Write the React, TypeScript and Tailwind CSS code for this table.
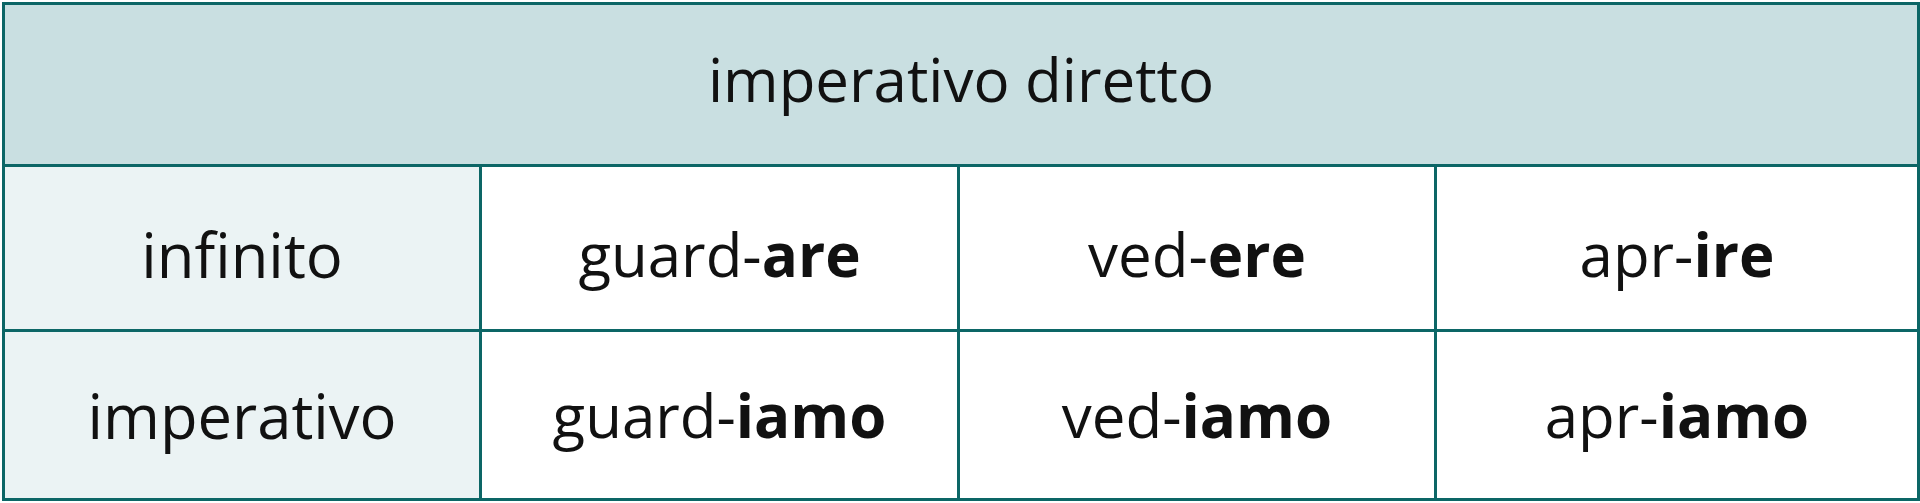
const rows = [
  { label: "infinito", cells: [["guard-", "are"], ["ved-", "ere"], ["apr-", "ire"]] },
  { label: "imperativo", cells: [["guard-", "iamo"], ["ved-", "iamo"], ["apr-", "iamo"]] },
];

export default function App() {
  return (
    <div className="bg-white w-[1920px] h-[503px] pt-[2px] pl-[2px] text-[#111] font-['Open_Sans',sans-serif]">
      <div className="w-[1918px] border-[3px] border-[#0c6666]">
        <div className="h-[162px] pb-[12px] flex items-center justify-center bg-[#c9dfe1] border-b-[3px] border-[#0c6666] text-[60px]">
          imperativo diretto
        </div>
        {rows.map((row, i) => {
          const pad = i === 0 ? "pt-[12px]" : "";
          return (
            <div
              key={row.label}
              className={
                i === 0
                  ? "grid grid-cols-[474px_478px_477px_483px] h-[165px] border-b-[3px] border-[#0c6666]"
                  : "grid grid-cols-[474px_478px_477px_483px] h-[166px]"
              }
            >
              <div className={`flex items-center justify-center bg-[#ebf3f4] text-[61.5px] ${pad}`}>
                {row.label}
              </div>
              {row.cells.map(([stem, ending]) => (
                <div
                  key={stem + ending}
                  className={`flex items-center justify-center border-l-[3px] border-[#0c6666] text-[60px] ${pad}`}
                >
                  <span>
                    {stem}
                    <span className="font-bold">{ending}</span>
                  </span>
                </div>
              ))}
            </div>
          );
        })}
      </div>
    </div>
  );
}
